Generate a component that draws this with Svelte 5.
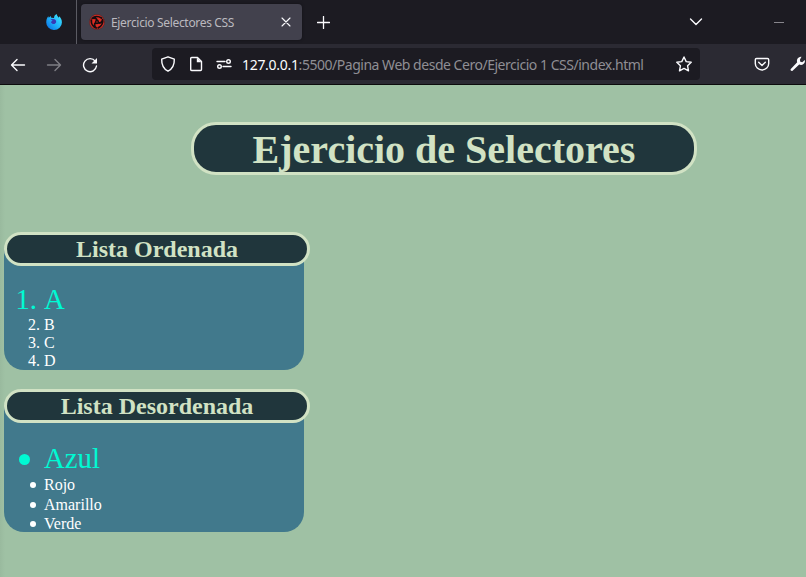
<script>
  const ordered = ['A', 'B', 'C', 'D'];
  const unordered = ['Azul', 'Rojo', 'Amarillo', 'Verde'];
</script>

<div class="window">
  <header class="tabs">
    <div class="pinned">
      <svg width="16" height="16" viewBox="0 0 16 16">
        <defs>
          <linearGradient id="fox" x1="1" y1="0" x2="0" y2="1">
            <stop offset="0" stop-color="#43ecff" />
            <stop offset=".5" stop-color="#20b4fa" />
            <stop offset="1" stop-color="#0868e2" />
          </linearGradient>
        </defs>
        <path fill="url(#fox)" d="M.3 7.500C.4 5 1.300 3.400 2.300 2.200l.5 1.500L4.600 2l.7 1.700 2.700.4C8 2 9 .8 10.700 0c.1 1.900 1.300 2.500 2.200 3.700l.2-1.400C15 4 16 6 15.900 8.500A7.800 7.500 0 0 1 8.100 16 7.700 7.700 0 0 1 .3 7.500z" />
        <path fill="#3738b5" d="M4.500 5.200 7 5c2.200.2 3.600 1.500 3.100 3.200-.5 1.500-1.800 2-3.200 1.700-1.200-.3-1.900-1.200-1.900-2.200l1.600-.9z" />
      </svg>
    </div>
    <div class="tab">
      <svg width="16" height="16" viewBox="0 0 16 16">
        <circle cx="8" cy="8" r="7.600" fill="#dd2c22" stroke="#4a2226" stroke-width=".5" />
        <g fill="none" stroke="#160d10" stroke-width="1.800">
          <path id="blade" d="M8 6.500C7.800 4.600 6 3.400 3.200 4.300 5.500 2.200 9.500 2 12.500 4" />
          <use href="#blade" transform="rotate(120 8 8)" />
          <use href="#blade" transform="rotate(240 8 8)" />
        </g>
        <circle cx="8" cy="8" r="2.200" fill="#160d10" />
        <circle cx="8" cy="8" r=".7" fill="#c92a22" />
      </svg>
      <span class="tab-title">Ejercicio Selectores CSS</span>
      <svg class="close" width="10" height="10" viewBox="0 0 10 10"><path d="m1 1 8 8M9 1 1 9" /></svg>
    </div>
    <svg class="plus" width="13" height="13" viewBox="0 0 13 13"><path d="M6.500.5v12M.5 6.500h12" /></svg>
    <svg class="chevron" width="14" height="8" viewBox="0 0 14 8"><path d="m1.500 1 5.500 5.500L12.500 1" /></svg>
    <svg class="minimize" width="10" height="1" viewBox="0 0 10 1"><path d="M0 .5h10" /></svg>
  </header>

  <nav class="toolbar">
    <svg class="back" width="16" height="16" viewBox="0 0 16 16"><path d="M14.500 8H2M7 2.500 1.500 8 7 13.500" /></svg>
    <svg class="forward" width="16" height="16" viewBox="0 0 16 16"><path d="M1.500 8H14M9 2.500 14.500 8 9 13.500" /></svg>
    <svg class="reload" width="16" height="16" viewBox="0 0 16 16"><path d="M13.300 4.300A6.500 6.500 0 1 0 14.500 9" /><path class="solid" d="M15 1v5.500H9.500z" /></svg>
    <div class="address">
      <svg width="16" height="16" viewBox="0 0 16 16"><path d="M8 .8 14.300 3.200C14.500 8.800 12.500 12.800 8 15.200 3.500 12.800 1.500 8.800 1.700 3.200z" /></svg>
      <svg class="page-icon" width="16" height="16" viewBox="0 0 16 16"><path d="M2.700 2.500q0-1 1-1H9.500l4 4V13.500q0 1-1 1h-8.800q-1 0-1-1z" /><path class="solid" d="M8.800 1.500v4.700h4.700z" /></svg>
      <svg class="perm" width="16" height="16" viewBox="0 0 16 16"><path d="M1 5.500h8M7 10.500h8" /><circle cx="12.500" cy="5.500" r="1.800" /><circle cx="3.500" cy="10.500" r="1.800" /></svg>
      <span class="url"><b>127.0.0.1</b>:5500/Pagina Web desde Cero/Ejercicio 1 CSS/index.html</span>
      <svg class="star" width="16" height="16" viewBox="0 0 16 16"><path d="m8 1 2.200 4.600 5 .7-3.600 3.500.9 5L8 12.400l-4.500 2.400.9-5L.8 6.300l5-.7z" /></svg>
    </div>
    <svg class="pocket" width="16" height="16" viewBox="0 0 16 16"><path d="M2.500 2.500h11q1.200 0 1.200 1.200V7.500a6.700 6.500 0 0 1-13.400 0V3.700q0-1.200 1.200-1.200zM4.700 6.300 8 9.500l3.300-3.200" /></svg>
    <svg class="wrench" width="16" height="16" viewBox="0 0 16 16"><path class="solid" d="M11.500.8a4 4 0 0 0-4.300 5.400L.8 12.900q-.6.900.1 1.700t1.700.1l6.600-6.100a4 4 0 0 0 5.600-4.600l-2.500 2.200-2-.4-.4-2z" /></svg>
  </nav>

  <main>
    <h1>Ejercicio de Selectores</h1>
    <section>
      <h2>Lista Ordenada</h2>
      <ol>
        {#each ordered as item, i}
          <li><span class="marker">{i + 1}.</span>{item}</li>
        {/each}
      </ol>
    </section>
    <section class="loose">
      <h2>Lista Desordenada</h2>
      <ul>
        {#each unordered as item}
          <li><span class="marker"><i></i></span>{item}</li>
        {/each}
      </ul>
    </section>
  </main>
</div>

<style>
  .window { width: 806px; height: 577px; overflow: hidden; display: flex; flex-direction: column; background: #9fc1a4; }
  svg { display: block; flex: none; fill: none; stroke: #fbfbfe; stroke-width: 1.4; stroke-linecap: round; stroke-linejoin: round; }
  .solid { fill: #fbfbfe; stroke: none; }
  .tabs { box-sizing: border-box; height: 44px; flex: none; display: flex; align-items: center; background: #1c1b22; }
  .pinned { box-sizing: border-box; width: 77px; height: 44px; padding: 14px 0 0 46px; border-right: 1px solid #5b5b63; }
  .pinned svg, .tab svg:first-child { stroke: none; }
  .tab { box-sizing: border-box; display: flex; align-items: center; width: 221px; height: 36px; margin-left: 4px; padding: 0 11px 0 8px; border-radius: 4px; background: #42414d; box-shadow: 0 0 3px #0006; }
  .tab-title { margin: 2px 0 0 6px; flex: 1; font: 12px/18px "Noto Sans", sans-serif; color: #bbb9bf; white-space: nowrap; letter-spacing: -.33px; }
  .close { stroke-width: 1.1; }
  .plus { margin-left: 15px; stroke-width: 1.3; }
  .chevron { margin-left: 359px; }
  .minimize { margin-left: 71px; stroke: #87868c; stroke-width: 1; stroke-linecap: butt; }
  .toolbar { box-sizing: border-box; height: 41px; flex: none; display: flex; align-items: center; padding-left: 10px; background: #2b2a33; border-bottom: 1px solid #0c0c0d; }
  .back, .forward, .reload { margin-top: 1px; }
  .forward { margin-left: 20px; opacity: .4; }
  .reload { margin-left: 20px; }
  .address { box-sizing: border-box; height: 32px; width: 548px; margin-left: 54px; padding: 0 8px; display: flex; align-items: center; border-radius: 4px; background: #1c1b22; }
  .page-icon { margin-left: 12px; }
  .perm { margin-left: 12px; }
  .url { flex: 1; margin: 2px 0 0 10px; font: 14px/20px "Noto Sans", sans-serif; color: #8f8e94; white-space: nowrap; letter-spacing: -.475px; }
  .url b { font-weight: 400; color: #fbfbfe; letter-spacing: -.3px; }
  .pocket { margin-left: 54px; }
  .wrench { margin-left: 20px; }
  main { flex: 1; background: linear-gradient(90deg, #99ba9e, #9fc1a4 5px); font: 16px/18px "Liberation Serif", "Times New Roman", serif; color: #fff; }
  h1, h2 { box-sizing: border-box; margin: 0; border: 3px solid #d1e2c4; background: #20363c; color: #d1e2c4; text-align: center; }
  h1 { width: 506px; height: 53px; margin: 37px 0 57px 191px; border-radius: 25px; font-size: 40px; line-height: 49px; }
  section { width: 300px; height: 138px; margin: 0 0 19px 4px; border-radius: 20px; background: #41798c; }
  h2 { width: 306px; height: 34px; border-radius: 20px; font-size: 24px; line-height: 28px; }
  ol, ul { list-style: none; margin: 0; padding: 17px 0 0; }
  li { display: flex; height: 18px; }
  .marker { width: 36px; margin-right: 4px; text-align: right; }
  li:first-child { height: 33px; line-height: 33px; font-size: 28.800px; color: #00f9d3; }
  li:first-child .marker { width: 33px; margin-right: 7px; }
  .loose { height: 143px; }
  .loose ul { padding-top: 19px; }
  .loose li:first-child { height: 34px; }
  .loose li:nth-child(2) { height: 20px; }
  .loose li:nth-child(3) { height: 19px; }
  .loose .marker { display: flex; align-items: center; justify-content: flex-end; height: 18px; }
  i { width: 6px; height: 6px; margin-right: 4px; border-radius: 50%; background: currentColor; }
  .loose li:first-child .marker { height: 35px; }
  li:first-child i { width: 11px; height: 11px; margin-right: 7px; }
</style>
